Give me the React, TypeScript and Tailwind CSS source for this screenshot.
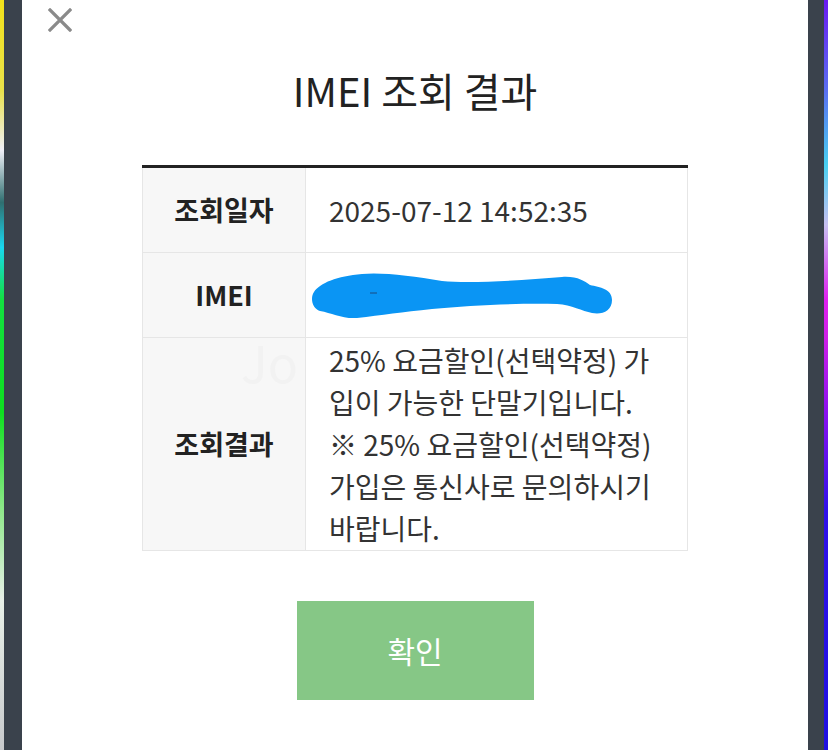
import React from "react";

const font = { fontFamily: '"Noto Sans CJK KR", "Noto Sans", sans-serif' };

export default function App() {
  return (
    <div
      className="w-[828px] h-[750px] flex overflow-hidden bg-white"
      style={font}
    >
      <div className="w-[4px] h-full bg-[linear-gradient(to_bottom,#f2e21a_0%,#e9e24a_12%,#f0f0f8_20%,#2f6f70_27%,#19d8f0_33%,#13e040_40%,#0fdf20_55%,#8fe88a_68%,#e8f0e8_80%,#c7c9cc_100%)]" />
      <div className="w-[18px] h-full bg-[#3a424c]" />
      <div className="relative flex-1 h-full bg-white flex flex-col items-center">
        <div className="absolute left-[26px] top-[8px] w-[24px] h-[24px]">
          <svg width="24" height="24" viewBox="0 0 24 24">
            <path d="M2 2 L22 22 M22 2 L2 22" stroke="#8a8a8a" strokeWidth="3.2" strokeLinecap="square" />
          </svg>
        </div>
        <div className="mt-[62px] h-[56px] flex items-center text-[40px] text-[#222] leading-none">
          IMEI 조회 결과
        </div>
        <div className="mt-[47px] w-[546px] border-t-[3px] border-[#222]">
          <div className="flex h-[85px] border-b border-[#e6e6e6]">
            <div className="w-[164px] bg-[#f7f7f7] border-l border-r border-[#e6e6e6] flex items-center justify-center text-[27px] font-bold text-[#222]">
              조회일자
            </div>
            <div className="flex-1 border-r border-[#e6e6e6] flex items-center pl-[23px] text-[28px] text-[#333]">
              2025-07-12 14:52:35
            </div>
          </div>
          <div className="flex h-[85px] border-b border-[#e6e6e6]">
            <div className="w-[164px] bg-[#f7f7f7] border-l border-r border-[#e6e6e6] flex items-center justify-center text-[27px] font-bold text-[#222]">
              IMEI
            </div>
            <div className="flex-1 border-r border-[#e6e6e6] flex items-center pl-[4px]">
              <svg width="304" height="50" viewBox="308 275 304 50">
                <path
                  d="M 312 297 C 318 288, 335 281, 360 279 C 380 277, 410 281, 440 286 C 470 289, 520 285, 560 282 C 575 281, 582 286, 588 290 C 598 292, 610 294, 610 305 C 610 316, 600 320, 590 318 C 580 316, 570 310, 555 309 C 520 308, 470 310, 430 314 C 400 317, 380 320, 355 323 C 340 324, 330 318, 318 316 C 310 313, 308 303, 312 297 Z"
                  fill="#0a95f4"
                />
                <path d="M368 298 L375 298" stroke="#1b4a80" strokeWidth="1" />
              </svg>
            </div>
          </div>
          <div className="flex h-[213px] border-b border-[#e6e6e6]">
            <div className="relative w-[164px] bg-[#f7f7f7] border-l border-r border-[#e6e6e6] flex items-center justify-center text-[27px] font-bold text-[#222]">
              <span className="absolute left-[98px] top-[-2px] text-[50px] font-normal text-[#f2f2f2] leading-none">Jo</span>
              <span className="relative">조회결과</span>
            </div>
            <div className="flex-1 border-r border-[#e6e6e6] flex flex-col justify-center pl-[23px] text-[28px] leading-[42px] text-[#333] whitespace-nowrap">
              <div>25% 요금할인(선택약정) 가</div>
              <div>입이 가능한 단말기입니다.</div>
              <div>※ 25% 요금할인(선택약정)</div>
              <div>가입은 통신사로 문의하시기</div>
              <div>바랍니다.</div>
            </div>
          </div>
        </div>
        <button className="mt-[50px] w-[237px] h-[99px] bg-[#86c786] text-white text-[30px] flex items-center justify-center">
          확인
        </button>
      </div>
      <div className="w-[16px] h-full bg-[#3a424c]" />
      <div className="w-[4px] h-full bg-[linear-gradient(to_bottom,#6a1af0_0%,#5a6ef0_12%,#49d0f0_22%,#c8c0f0_30%,#e020f0_40%,#d020e8_45%,#8a10f0_55%,#3010e8_68%,#2010e0_100%)]" />
    </div>
  );
}
